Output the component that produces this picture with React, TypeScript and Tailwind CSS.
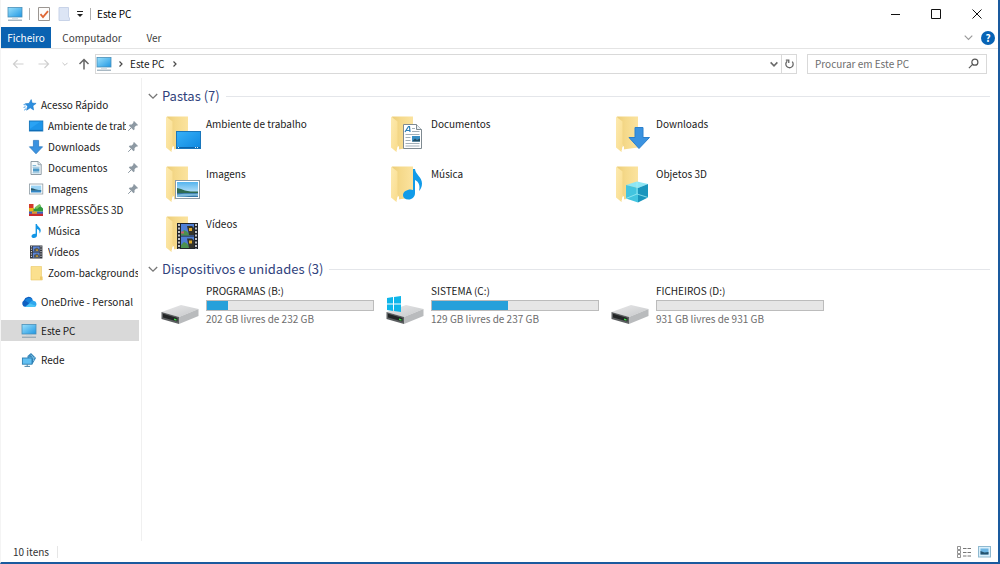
import type { ReactNode } from "react";

interface Folder {
  name: string;
  icon: ReactNode;
}

interface Drive {
  name: string;
  free: number;
  total: number;
  system?: boolean;
}

interface QuickItem {
  name: string;
  icon: ReactNode;
  pinned?: boolean;
}

/* ---------- small icons ---------- */

function PcIcon() {
  return (
    <svg viewBox="0 0 16 16" className="size-4 shrink-0" aria-hidden="true">
      <defs>
        <linearGradient id="pc-screen" x1="0" y1="0" x2="1" y2="1">
          <stop offset="0" stopColor="#9be0fb" />
          <stop offset="1" stopColor="#1f97e3" />
        </linearGradient>
      </defs>
      <rect x="1" y="1.5" width="14" height="9.5" fill="url(#pc-screen)" stroke="#4a8fb8" strokeWidth=".8" />
      <path d="M1 14.2h14" stroke="#8199a8" />
      <path d="M5 12.6h6" stroke="#c4d2da" strokeWidth=".8" />
    </svg>
  );
}

function StarIcon() {
  return (
    <svg viewBox="0 0 16 16" className="size-4 shrink-0" aria-hidden="true">
      <path d="M10.2 2.6l.9 3.5 4 .3-3.2 2.4.7 4.1-3.4-2.1-3.6 2.4 1-4-2.4-2.5 3.9-.3z" fill="#2d8fe0" stroke="#1979ca" strokeWidth=".6" />
      <path d="M2.6 7.6l2 .3M2.6 10.4l2-.6M3.2 13.200l2-1.600" stroke="#3c9ae6" />
    </svg>
  );
}

function DesktopIcon() {
  return (
    <svg viewBox="0 0 16 16" className="size-4 shrink-0" aria-hidden="true">
      <rect x="1.4" y="3" width="13.4" height="10" fill="#2aa3f4" stroke="#1272b9" strokeWidth=".9" />
      <path d="M2 10.8L12.5 3.4h2v9.2H2z" fill="#168ce2" opacity=".6" />
      <path d="M2 12.4h12.3" stroke="#0d62a8" strokeWidth=".8" />
    </svg>
  );
}

function DownIcon() {
  return (
    <svg viewBox="0 0 16 16" className="size-4 shrink-0" aria-hidden="true">
      <path d="M5.4 1.4h5.2v6.4h4L8 14.8 1.4 7.8h4z" fill="#3a92e0" stroke="#2273bd" strokeWidth=".7" />
    </svg>
  );
}

function DocIcon() {
  return (
    <svg viewBox="0 0 16 16" className="size-4 shrink-0" aria-hidden="true">
      <path d="M3 1.5h7.2l3 3v10H3z" fill="#f6fafc" stroke="#83929c" strokeWidth=".9" />
      <path d="M10 1.5v3.2h3.2" fill="#dbe4ea" stroke="#83929c" strokeWidth=".7" />
      <path d="M4.6 5.5h3.6M4.6 7.2h7M4.6 12.8h7" stroke="#78b2d4" strokeWidth=".9" />
      <rect x="5" y="8.4" width="6.4" height="3.2" fill="#4d9ac9" />
    </svg>
  );
}

function PictureIcon() {
  return (
    <svg viewBox="0 0 16 16" className="size-4 shrink-0" aria-hidden="true">
      <rect x="1.4" y="3" width="13.4" height="10" fill="#fff" stroke="#8e9ba4" strokeWidth=".8" />
      <rect x="3" y="4.6" width="10.2" height="6.8" fill="#9bd4f5" />
      <path d="M3 7.2c3 0 5 2 10.2 1.8v.8H3z" fill="#27586b" />
      <path d="M3 9.6h10.2v1.8H3z" fill="#3386c6" />
    </svg>
  );
}

function PrintsIcon() {
  return (
    <svg viewBox="0 0 16 16" className="size-4 shrink-0" aria-hidden="true">
      <path d="M1 2h4.5v5H1z" fill="#d33a2c" />
      <path d="M1 6h5v4H1z" fill="#e7b51b" />
      <path d="M1 9.5h14v2.4H1z" fill="#3a5fc0" />
      <path d="M1 11.7h14V14H1z" fill="#c92b2f" />
      <path d="M5.5 7l6.9-3L15 6.5v3H5.500z" fill="#2f9b3d" />
      <path d="M6.5 5.4L11.4 2l1.8 1.2L9 7z" fill="#7ac45f" />
      <path d="M4 9.5h5v2.2H4z" fill="#e3982a" />
    </svg>
  );
}

function NoteIcon() {
  return (
    <svg viewBox="0 0 16 16" className="size-4 shrink-0" aria-hidden="true">
      <path d="M7.6 1h1.3c.3 2.5 3.8 3.4 3.8 6.4 0 1.4-.6 2.4-1.2 3.1.5-2.5-.7-4-2.5-4.6v6.3c0 1.7-1.4 2.8-3.1 2.8-1.400 0-2.400-.7-2.400-1.800 0-1.400 1.600-2.500 3.300-2.500.3 0 .6 0 .8.1z" fill="#1296e6" />
    </svg>
  );
}

function FilmIcon() {
  return (
    <svg viewBox="0 0 16 16" className="size-4 shrink-0" aria-hidden="true">
      <rect x="2" y="1.5" width="12.4" height="13" fill="#31343b" />
      <rect x="4.8" y="2.4" width="6.8" height="5.2" fill="#5b86d8" />
      <rect x="4.8" y="8.5" width="6.8" height="5.2" fill="#5b86d8" />
      <path d="M6 7.6V5l3-1.5 2.6 2v2.1zM6 13.7V11l3-1.5 2.6 2v2.2z" fill="#55585a" />
      <path d="M8 5.4h2v1.4H8zM8 11.4h2v1.4H8z" fill="#d9a62a" />
      <path d="M3.4 2.2v12M13 2.2v12" stroke="#e6e8ec" strokeDasharray="1.2 1.2" />
    </svg>
  );
}

function FolderIcon() {
  return (
    <svg viewBox="0 0 16 16" className="size-4 shrink-0" aria-hidden="true">
      <path d="M3 1.5h10.500V11l.8 1v3H3z" fill="#fbe08e" stroke="#e9c765" strokeWidth=".6" />
      <path d="M12 11.500h2v3.200h-2z" fill="#eec867" />
    </svg>
  );
}

function CloudIcon() {
  return (
    <svg viewBox="0 0 16 16" className="size-4 shrink-0" aria-hidden="true">
      <path d="M4.5 13A3.6 3.6 0 0 1 3 6.3 4.7 4.7 0 0 1 11.5 5L8 11z" fill="#0f5fc0" />
      <path d="M5 5.3C7.5 3 11 4 12 6.6l-3 3.2-5-3.4z" fill="#1683db" />
      <path d="M4 13l5-4.5c1-1.6 2.2-2 3.6-1.8A3.2 3.2 0 0 1 13 13z" fill="#2ea7ee" />
      <path d="M4 13l5-3.6 5.8 2.4c-.5.8-1.3 1.2-2.2 1.2z" fill="#4cc4f6" />
    </svg>
  );
}

function NetworkIcon() {
  return (
    <svg viewBox="0 0 16 16" className="size-4 shrink-0" aria-hidden="true">
      <path d="M10 1l5 5-3.500 6-5-2V4z" fill="#3484b8" />
      <path d="M9.5 3c2.500 1 3.500 3.500 3 6M7.500 5c2 .8 4.500 1 6.500.8" stroke="#86c9ea" strokeWidth=".8" fill="none" />
      <rect x="1.4" y="6" width="9.6" height="6.2" fill="#62c0f2" stroke="#2c7db0" strokeWidth=".9" />
      <path d="M3.5 14.400H9M6.200 12.200v2.200" stroke="#4f87a8" />
    </svg>
  );
}

function PinIcon() {
  return (
    <svg viewBox="0 0 12 12" className="size-3 shrink-0" aria-hidden="true">
      <path d="M7 1l4 4-1 .8-.8-.2-1.700 1.700.1 1.900-1 1-4.800-4.800 1-1 1.900.1L6.400 2.800 6.200 2z" fill="#8d99a3" />
      <path d="M4 8l-2.800 2.800" stroke="#8d99a3" />
    </svg>
  );
}

function ChevronDown({ className }: { className: string }) {
  return (
    <svg viewBox="0 0 10 10" className={className} fill="none" stroke="currentColor" strokeWidth="1.3" aria-hidden="true">
      <path d="M.8 3L5 7.200 9.200 3" />
    </svg>
  );
}

function ChevronRight() {
  return (
    <svg viewBox="0 0 6 8" className="h-2 w-1.5 shrink-0" fill="none" stroke="#4a4a4a" strokeWidth="1.2" aria-hidden="true">
      <path d="M1.5 1.5L4 4 1.5 6.5" />
    </svg>
  );
}

/* ---------- large icons ---------- */

function LargeFolder({ children }: { children: ReactNode }) {
  return (
    <svg viewBox="0 0 42 40" className="h-10 w-[42px] shrink-0" aria-hidden="true">
      <defs>
        <linearGradient id="folder-back" x1="0" y1="0" x2="1" y2="0">
          <stop offset="0" stopColor="#eccd78" />
          <stop offset=".4" stopColor="#f5d98a" />
          <stop offset="1" stopColor="#fbe39f" />
        </linearGradient>
        <linearGradient id="folder-flap" x1="0" y1="0" x2="1" y2="1">
          <stop offset="0" stopColor="#fdeab0" />
          <stop offset="1" stopColor="#f9dc8c" />
        </linearGradient>
      </defs>
      <path d="M6 2.5h21v31l-15 2z" fill="url(#folder-back)" />
      <path d="M5 2.5l6.5 5v26l-1 4.5L5 33.5z" fill="url(#folder-flap)" />
      <path d="M11.5 33l1.5-1v3.5l-2.500 2z" fill="#fff" />
      {children}
    </svg>
  );
}

const desktopOverlay = (
  <>
    <defs>
      <linearGradient id="desk" x1="0" y1="0" x2="1" y2="1">
        <stop offset="0" stopColor="#38b1f8" />
        <stop offset="1" stopColor="#0d87e0" />
      </linearGradient>
    </defs>
    <rect x="15.5" y="17.5" width="24" height="17" fill="url(#desk)" stroke="#1a76bb" />
    <path d="M16 33.5h23" stroke="#0b64ac" />
    <path d="M34 33.5h1M36 33.5h1M17 33.5h1" stroke="#d7eefc" />
  </>
);

const documentOverlay = (
  <>
    <path d="M17.5 10.5h13l5 5v19h-18z" fill="#fff" stroke="#7f8a91" />
    <path d="M30.5 10.5v5h5" fill="#e8eef2" stroke="#7f8a91" />
    <path d="M19 18l3.5-5.500h1L24 18M20.500 16.500H24" stroke="#2b7db7" strokeWidth="1.2" fill="none" />
    <path d="M26 14.5h3M26 17.5h7.500M19.500 20.500h14M19.500 23.500h5M19.500 26.500h5M19.500 29.500h14M19.500 32h14" stroke="#a3b0b8" />
    <rect x="26" y="22" width="8" height="5.5" fill="#3a8fc4" />
    <path d="M26 27.5l3-3 2 1.500 3-1.500v3z" fill="#254e62" />
  </>
);

const downloadOverlay = (
  <path d="M24 13.5h8v10h6.500L28 34.500 18 23.500h6z" fill="#3a92e0" stroke="#2a80cd" />
);

const pictureOverlay = (
  <>
    <defs>
      <linearGradient id="sky" x1="0" y1="0" x2="0" y2="1">
        <stop offset="0" stopColor="#55b4ee" />
        <stop offset="1" stopColor="#e2f4fc" />
      </linearGradient>
    </defs>
    <rect x="14.5" y="16.5" width="24" height="18" fill="#fff" stroke="#8b9aa5" />
    <rect x="16" y="18" width="21" height="15" fill="url(#sky)" />
    <path d="M16 24c3 .5 5 1.500 8 2.500s8 1 13 1V29H16z" fill="#2f6b52" />
    <path d="M16 29h21v4H16z" fill="#3576a6" />
    <path d="M16 30.500c6-1.500 14-.5 21-1v2.500c-8-1-14 1-21 1z" fill="#7db9da" />
  </>
);

const musicOverlay = (
  <path
    d="M27 5h2c.5 5.500 7 8 7 14.500 0 3.500-1.500 6-3 7.500 1.500-5.500-.5-9.500-4-11v13c0 4-3 6.500-6.500 6.500s-5.500-1.800-5.500-4.300c0-3.500 4-5.700 7.500-5.700.9 0 1.800.2 2.500.5z"
    fill="#119be9"
  />
);

const cubeOverlay = (
  <>
    <path d="M15 21l11-3.500L37 20l-10 4z" fill="#8ce6f5" />
    <path d="M15 21l12 3v14.500l-12-4z" fill="#42c4df" />
    <path d="M27 24l10-4v13.500l-10 5z" fill="#1995bd" />
    <path d="M15 34.500L26 30l11 3.500M26 30V18" stroke="#a8f0f8" strokeWidth=".7" fill="none" />
  </>
);

const videoOverlay = (
  <>
    <rect x="16" y="9" width="21" height="26" fill="#20242a" />
    <rect x="20" y="10" width="13" height="11.5" fill="#4f7fd6" />
    <rect x="20" y="22.5" width="13" height="11.5" fill="#4f7fd6" />
    <path d="M20 19l3-3 3 1.500 3 4h-9zM20 31l3-3 3 1.500 3 4.500h-9z" fill="#4c9150" />
    <path d="M26 12h5l2 2v7h-5zM26 24.500h5l2 2V34h-5z" fill="#35352b" />
    <path d="M28 14h3v3h-3zM28 26.500h3v3h-3z" fill="#e0aa26" />
    <path d="M20 17.500h3v2h-3z" fill="#c85f71" />
    <path d="M18 10v25M35 10v25" stroke="#eceef1" strokeWidth="1.6" strokeDasharray="2 1.5" />
  </>
);

function DriveIcon({ system = false }: { system?: boolean }) {
  return (
    <svg viewBox="0 0 42 40" className="mt-[5px] h-10 w-[42px] shrink-0" aria-hidden="true">
      <defs>
        <linearGradient id="drive-top" x1="0" y1="0" x2="1" y2="1">
          <stop offset="0" stopColor="#e9e9ea" />
          <stop offset="1" stopColor="#c6c8ca" />
        </linearGradient>
      </defs>
      <path d="M.5 24L20 17l17.500 4L18 29z" fill="url(#drive-top)" />
      <path d="M18 29l19.500-8v7L18 36z" fill="#b9bbbd" />
      <path d="M.5 24L18 29v7L.5 31z" fill="#5b5e60" />
      <path d="M2 25.800L16.500 30v3.500L2 29.500z" fill="#222526" />
      <path d="M13 30.500l2.500.7v1.500l-2.500-.7z" fill="#3fdc4a" />
      {system && (
        <path d="M1 10l6-1v6.500H1zM8 8.900L15 8v7.500H8zM1 16.500h6V23l-6-1zM8 16.500h7V24l-7-.9z" fill="#0fb6ea" />
      )}
    </svg>
  );
}

/* ---------- data ---------- */

const quickAccess: QuickItem[] = [
  { name: "Ambiente de trabalho", icon: <DesktopIcon />, pinned: true },
  { name: "Downloads", icon: <DownIcon />, pinned: true },
  { name: "Documentos", icon: <DocIcon />, pinned: true },
  { name: "Imagens", icon: <PictureIcon />, pinned: true },
  { name: "IMPRESSÕES 3D", icon: <PrintsIcon /> },
  { name: "Música", icon: <NoteIcon /> },
  { name: "Vídeos", icon: <FilmIcon /> },
  { name: "Zoom-backgrounds", icon: <FolderIcon /> },
];

const folders: Folder[] = [
  { name: "Ambiente de trabalho", icon: desktopOverlay },
  { name: "Documentos", icon: documentOverlay },
  { name: "Downloads", icon: downloadOverlay },
  { name: "Imagens", icon: pictureOverlay },
  { name: "Música", icon: musicOverlay },
  { name: "Objetos 3D", icon: cubeOverlay },
  { name: "Vídeos", icon: videoOverlay },
];

const drives: Drive[] = [
  { name: "PROGRAMAS (B:)", free: 202, total: 232 },
  { name: "SISTEMA (C:)", free: 129, total: 237, system: true },
  { name: "FICHEIROS (D:)", free: 931, total: 931 },
];

/* ---------- window parts ---------- */

function TitleBar() {
  return (
    <header className="flex h-[27px] items-center pl-[6px]">
      <PcIcon />
      <span className="ml-[6px] h-3 w-px bg-[#b0b0b0]" />
      <button type="button" aria-label="Propriedades" className="ml-[6px] size-4">
        <svg viewBox="0 0 16 16" className="size-4">
          <path d="M2.5 1.5h11v13h-11z" fill="#fdfcfb" stroke="#9b9692" />
          <path d="M4.5 8.2l2.5 2.9 5-6" fill="none" stroke="#df6735" strokeWidth="1.8" />
        </svg>
      </button>
      <button type="button" aria-label="Nova pasta" className="ml-1 size-4">
        <svg viewBox="0 0 16 16" className="size-4">
          <path d="M3 1.5h9.500V11l1 1v2.500H3z" fill="#dce5f5" stroke="#c8d3e8" />
        </svg>
      </button>
      <button type="button" aria-label="Personalizar" className="ml-1 size-2">
        <svg viewBox="0 0 8 8" className="size-2">
          <path d="M1 1.5h6" stroke="#222" />
          <path d="M1 4h6L4 7z" fill="#222" />
        </svg>
      </button>
      <span className="ml-[6px] h-3 w-px bg-[#b0b0b0]" />
      <h1 className="ml-[6px] text-[10px] text-black">Este PC</h1>
      <div className="ml-auto flex text-[#111]">
        <button type="button" aria-label="Minimizar" className="flex h-[27px] w-10 items-center justify-center">
          <svg viewBox="0 0 10 10" className="size-2.5" stroke="currentColor">
            <path d="M0 5.5h9" />
          </svg>
        </button>
        <button type="button" aria-label="Maximizar" className="flex h-[27px] w-10 items-center justify-center">
          <svg viewBox="0 0 10 10" className="size-2.5" stroke="currentColor" fill="none">
            <path d="M.5.5h9v9h-9z" />
          </svg>
        </button>
        <button type="button" aria-label="Fechar" className="flex h-[27px] w-[42px] items-center justify-center">
          <svg viewBox="0 0 10 10" className="size-2.5" stroke="currentColor">
            <path d="M.5.5l9 9M9.5.5l-9 9" />
          </svg>
        </button>
      </div>
    </header>
  );
}

function RibbonTabs() {
  return (
    <div className="flex h-[22px] items-stretch border-b border-[#e4e4e4] text-[10px] text-[#3c3c3c]">
      <button type="button" className="w-[50px] bg-[#0a62b1] text-center text-white">Ficheiro</button>
      <button type="button" className="w-[82px] text-center">Computador</button>
      <button type="button" className="w-[42px] text-center">Ver</button>
      <div className="ml-auto flex items-center gap-2 pr-[3px]">
        <button type="button" aria-label="Expandir friso">
          <ChevronDown className="size-[9px] text-[#999]" />
        </button>
        <button type="button" aria-label="Ajuda" className="flex size-[14px] items-center justify-center rounded-full bg-[#0763b5] text-[10px] leading-none font-bold text-white">
          ?
        </button>
      </div>
    </div>
  );
}

function AddressBar() {
  return (
    <div className="flex h-[29px] items-center px-[11px]">
      <button type="button" aria-label="Anterior">
        <svg viewBox="0 0 12 12" className="size-3" fill="none" stroke="#cfcfcf" strokeWidth="1.2">
          <path d="M11.5 6h-10M5.5 2l-4 4 4 4" />
        </svg>
      </button>
      <button type="button" aria-label="Seguinte" className="ml-[14px]">
        <svg viewBox="0 0 12 12" className="size-3" fill="none" stroke="#cfcfcf" strokeWidth="1.2">
          <path d="M.5 6h10M6.5 2l4 4-4 4" />
        </svg>
      </button>
      <button type="button" aria-label="Localizações recentes" className="ml-3">
        <ChevronDown className="size-[6px] text-[#b5b5b5]" />
      </button>
      <button type="button" aria-label="Subir" className="ml-[10px]">
        <svg viewBox="0 0 12 12" className="size-3" fill="none" stroke="#666" strokeWidth="1.5">
          <path d="M6 11.5v-10M1.5 6L6 1.5 10.5 6" />
        </svg>
      </button>
      <div className="ml-[5px] flex h-5 flex-1 items-center border border-[#d9d9d9]">
        <PcIcon />
        <span className="ml-[6px] flex"><ChevronRight /></span>
        <button type="button" className="ml-[6px] text-[10px] text-[#1a1a1a]">Este PC</button>
        <span className="ml-2 flex"><ChevronRight /></span>
        <button type="button" aria-label="Localizações anteriores" className="mr-[3px] ml-auto">
          <ChevronDown className="size-2 stroke-2 text-[#6a6a6a]" />
        </button>
        <button type="button" aria-label="Atualizar" className="flex h-full w-[15px] items-center justify-center border-l border-[#d9d9d9]">
          <svg viewBox="0 0 12 12" className="size-[11px]" fill="none" stroke="#666" strokeWidth="1.4">
            <path d="M3.5 3.5a4 4 0 1 0 5.500.5M2 2.200h3.200v3.200" />
          </svg>
        </button>
      </div>
      <label className="ml-[10px] flex h-5 w-[180px] items-center border border-[#d9d9d9] px-[7px]">
        <input
          type="search"
          aria-label="Procurar em Este PC"
          placeholder="Procurar em Este PC"
          className="w-full min-w-0 bg-transparent text-[10px] outline-none placeholder:text-[#6d6d6d]"
        />
        <svg viewBox="0 0 12 12" className="size-[11px] shrink-0" fill="none" stroke="#555" strokeWidth="1.3" aria-hidden="true">
          <circle cx="7.5" cy="4.5" r="3.3" />
          <path d="M5 7l-4 4" />
        </svg>
      </label>
    </div>
  );
}

function Sidebar() {
  return (
    <nav className="flex w-[141px] shrink-0 flex-col gap-2 border-r border-[#f0f0f0] pt-4 pr-[2px] text-[10px] text-[#1a1a1a]">
      <ul>
        <li>
          <a href="#acesso" className="flex h-[21px] items-center gap-1 pl-5">
            <StarIcon />
            Acesso Rápido
          </a>
        </li>
        {quickAccess.map((item) => (
          <li key={item.name}>
            <a href="#item" className="flex h-[21px] items-center pl-[27px]">
              {item.icon}
              <span className="mr-px ml-1 min-w-0 flex-1 overflow-hidden whitespace-nowrap">{item.name}</span>
              {item.pinned && <PinIcon />}
            </a>
          </li>
        ))}
      </ul>
      <a href="#onedrive" className="flex h-[21px] items-center gap-1 pl-5 whitespace-nowrap">
        <CloudIcon />
        OneDrive - Personal
      </a>
      <a href="#pc" aria-current="page" className="flex h-[21px] items-center gap-1 bg-[#d9d9d9] pl-5">
        <PcIcon />
        Este PC
      </a>
      <a href="#rede" className="flex h-[21px] items-center gap-1 pl-5">
        <NetworkIcon />
        Rede
      </a>
    </nav>
  );
}

function GroupHeading({ title }: { title: string }) {
  return (
    <h2 className="flex h-5 items-center text-[13px] text-[#2f427c]">
      <button type="button" className="flex items-center gap-1 whitespace-nowrap">
        <ChevronDown className="size-[10px] text-[#777]" />
        {title}
      </button>
      <span className="ml-[6px] h-px flex-1 bg-[#e4e6ea]" />
    </h2>
  );
}

function FolderTile({ name, icon }: Folder) {
  return (
    <li className="flex h-[50px] items-start gap-[3px] pt-[2px]">
      <LargeFolder>{icon}</LargeFolder>
      <span className="pt-[2px] text-[10px] leading-4 text-[#1a1a1a]">{name}</span>
    </li>
  );
}

function DriveTile({ name, free, total, system }: Drive) {
  const used = total - free;

  return (
    <li className="flex items-start gap-[3px]">
      <DriveIcon system={system} />
      <div className="w-[168px] text-[10px] leading-4">
        <p className="h-[17px] text-[#1a1a1a]">{name}</p>
        <div
          role="meter"
          aria-label={name}
          aria-valuemin={0}
          aria-valuemax={total}
          aria-valuenow={used}
          className="h-[11px] border border-[#bcbcbc] bg-[#e6e6e6]"
        >
          <div className="h-full bg-[#26a0da]" style={{ width: `${(used / total) * 100}%` }} />
        </div>
        <p className="text-[#6d6d6d]">{free} GB livres de {total} GB</p>
      </div>
    </li>
  );
}

function StatusBar() {
  return (
    <footer className="flex h-[21px] items-center pr-[7px] pl-3 text-[10px] text-[#333]">
      <span>10 itens</span>
      <span className="ml-2 h-3 w-px bg-[#e6e6e6]" />
      <div className="ml-auto flex gap-[6px]">
        <button type="button" aria-label="Detalhes">
          <svg viewBox="0 0 15 12" className="h-3 w-[15px]" fill="none" stroke="#777">
            <path d="M.5.5h3v3h-3zM.5 4.5h3v3h-3zM.5 8.5h3v3h-3z" strokeWidth=".8" />
            <path d="M6 2.5h3.500M10.500 2.500H14M6 6.500h3.500M10.500 6.500H14M6 10h3.500M10.500 10H14" />
          </svg>
        </button>
        <button type="button" aria-label="Ícones grandes">
          <svg viewBox="0 0 13 12" className="h-3 w-[13px]">
            <rect x=".5" y=".5" width="12" height="10.5" fill="#d9effb" stroke="#8fb9d0" />
            <rect x="2.5" y="2.5" width="8" height="6" fill="#6db6e4" />
            <path d="M2.5 5l4 1.5 4-.5v2.500h-8z" fill="#24526e" />
          </svg>
        </button>
      </div>
    </footer>
  );
}

export default function App() {
  return (
    <div className="flex min-h-screen flex-col border-r-2 border-b-2 border-l border-r-[#1a5a9e] border-b-[#1a5a9e] border-l-[#f4f4f4] bg-white font-['Noto_Sans_CJK_JP','Open_Sans',sans-serif]">
      <TitleBar />
      <RibbonTabs />
      <AddressBar />
      <div className="flex flex-1">
        <Sidebar />
        <main className="min-w-0 flex-1 pt-2 pr-2 pl-[6px]">
          <section>
            <GroupHeading title="Pastas (7)" />
            <ul className="grid grid-cols-[repeat(auto-fill,225px)] pt-[6px] pl-[13px]">
              {folders.map((folder) => (
                <FolderTile key={folder.name} {...folder} />
              ))}
            </ul>
          </section>
          <section className="-mt-[3px]">
            <GroupHeading title="Dispositivos e unidades (3)" />
            <ul className="grid grid-cols-[repeat(auto-fill,225px)] pt-1 pl-[13px]">
              {drives.map((drive) => (
                <DriveTile key={drive.name} {...drive} />
              ))}
            </ul>
          </section>
        </main>
      </div>
      <StatusBar />
    </div>
  );
}
